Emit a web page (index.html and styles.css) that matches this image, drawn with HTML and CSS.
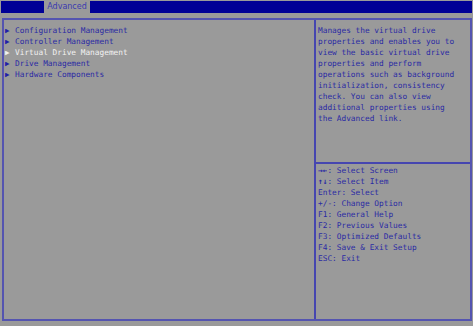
FILE: index.html
```html
<!DOCTYPE html>
<html>
<head>
<meta charset="utf-8">
<link rel="stylesheet" href="styles.css">
</head>
<body>
<div class="topbar">
  <div class="tab">Advanced</div>
</div>
<div class="frame">
  <div class="left">
    <div class="item"><span class="tri">&#9654;</span>Configuration Management</div>
    <div class="item"><span class="tri">&#9654;</span>Controller Management</div>
    <div class="item sel"><span class="tri">&#9654;</span>Virtual Drive Management</div>
    <div class="item"><span class="tri">&#9654;</span>Drive Management</div>
    <div class="item"><span class="tri">&#9654;</span>Hardware Components</div>
  </div>
  <div class="right">
    <div class="desc">Manages the virtual drive<br>properties and enables you to<br>view the basic virtual drive<br>properties and perform<br>operations such as background<br>initialization, consistency<br>check. You can also view<br>additional properties using<br>the Advanced link.</div>
    <div class="help">
      <div class="line"><span class="ar">&#8594;&#8592;</span>: Select Screen</div>
      <div class="line"><span class="ar">&#8593;&#8595;</span>: Select Item</div>
      <div class="line">Enter: Select</div>
      <div class="line">+/-: Change Option</div>
      <div class="line">F1: General Help</div>
      <div class="line">F2: Previous Values</div>
      <div class="line">F3: Optimized Defaults</div>
      <div class="line">F4: Save &amp; Exit Setup</div>
      <div class="line">ESC: Exit</div>
    </div>
  </div>
</div>
</body>
</html>
```
FILE: styles.css
```css
html, body {
  margin: 0;
  padding: 0;
  background: #9a9a9a;
  width: 473px;
  height: 326px;
  overflow: hidden;
}
body {
  font-family: "DejaVu Sans Mono", "Liberation Mono", monospace;
  font-size: 7.8px;
  line-height: 11px;
  color: #2a2aa4;
}
.topbar {
  margin: 1px 1px 0 1px;
  height: 12px;
  background: #000096;
  display: flex;
}
.tab {
  margin-left: 43px;
  width: 46px;
  background: #9a9a9a;
  color: #3a3ab0;
  text-align: center;
  line-height: 12px;
  font-family: "DejaVu Sans", "Liberation Sans", sans-serif;
  font-size: 8px;
}
.frame {
  margin: 5px 0 0 2px;
  width: 470px;
  height: 303px;
  box-sizing: border-box;
  border: 2px solid #5454b0;
  display: flex;
}
.left {
  width: 309px;
  flex-shrink: 0;
  padding: 5px 0 0 1px;
  border-right: 2px solid #4646b0;
}
.item {
  white-space: pre;
}
.tri {
  display: inline-block;
  width: 10px;
  font-size: 7.5px;
  color: #2020a8;
}
.sel, .sel .tri {
  color: #f2f2f2;
}
.right {
  flex: 1;
  display: flex;
  flex-direction: column;
}
.desc {
  flex-shrink: 0;
  height: 137px;
  padding: 5px 0 0 2px;
  border-bottom: 2px solid #4646b0;
  white-space: nowrap;
}
.help {
  padding: 1px 0 0 2px;
}
.line {
  white-space: pre;
}
.ar {
  display: inline-block;
  width: 9.4px;
  overflow: hidden;
  font-family: "DejaVu Sans Mono", monospace;
  font-size: 7.8px;
  font-weight: bold;
  letter-spacing: 0;
  line-height: 11px;
  vertical-align: top;
}
```
